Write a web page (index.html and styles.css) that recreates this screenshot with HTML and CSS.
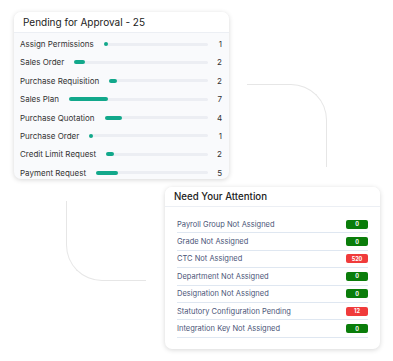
FILE: index.html
```html
<!DOCTYPE html>
<html lang="en">
<head>
<meta charset="utf-8">
<title>Dashboard</title>
<link rel="stylesheet" href="styles.css">
</head>
<body>
<div class="page">
  <div class="deco deco-tr"></div>
  <div class="deco deco-bl"></div>

  <section class="card approvals">
    <header class="card-head">Pending for Approval - 25</header>
    <div class="approval-list">
      <div class="a-row"><span class="a-label">Assign Permissions</span><div class="track"><div class="fill" style="width:4px"></div></div><span class="a-num">1</span></div>
      <div class="a-row"><span class="a-label">Sales Order</span><div class="track"><div class="fill" style="width:11px"></div></div><span class="a-num">2</span></div>
      <div class="a-row"><span class="a-label">Purchase Requisition</span><div class="track"><div class="fill" style="width:8px"></div></div><span class="a-num">2</span></div>
      <div class="a-row"><span class="a-label">Sales Plan</span><div class="track"><div class="fill" style="width:39px"></div></div><span class="a-num">7</span></div>
      <div class="a-row"><span class="a-label">Purchase Quotation</span><div class="track"><div class="fill" style="width:17px"></div></div><span class="a-num">4</span></div>
      <div class="a-row"><span class="a-label">Purchase Order</span><div class="track"><div class="fill" style="width:4px"></div></div><span class="a-num">1</span></div>
      <div class="a-row"><span class="a-label">Credit Limit Request</span><div class="track"><div class="fill" style="width:8px"></div></div><span class="a-num">2</span></div>
      <div class="a-row"><span class="a-label">Payment Request</span><div class="track"><div class="fill" style="width:22px"></div></div><span class="a-num">5</span></div>
    </div>
  </section>

  <section class="card attention">
    <header class="card-head head-bold">Need Your Attention</header>
    <div class="att-list">
      <div class="t-row"><span class="t-label">Payroll Group Not Assigned</span><span class="badge ok">0</span></div>
      <div class="t-row"><span class="t-label">Grade Not Assigned</span><span class="badge ok">0</span></div>
      <div class="t-row"><span class="t-label">CTC Not Assigned</span><span class="badge bad">520</span></div>
      <div class="t-row"><span class="t-label">Department Not Assigned</span><span class="badge ok">0</span></div>
      <div class="t-row"><span class="t-label">Designation Not Assigned</span><span class="badge ok">0</span></div>
      <div class="t-row"><span class="t-label">Statutory Configuration Pending</span><span class="badge bad">12</span></div>
      <div class="t-row"><span class="t-label">Integration Key Not Assigned</span><span class="badge ok">0</span></div>
    </div>
  </section>
</div>
</body>
</html>
```

FILE: styles.css
```css
* { box-sizing: border-box; }
html, body { margin: 0; padding: 0; background: #ffffff; }
body {
  font-family: "Inter", "DejaVu Sans", sans-serif;
  width: 393px;
  height: 361px;
  overflow: hidden;
}
.page {
  position: relative;
  width: 393px;
  height: 361px;
  padding-top: 12px;
}
.deco {
  position: absolute;
  border: 0 solid #e6e6e6;
}
.deco-tr {
  left: 247px;
  top: 84px;
  width: 80px;
  height: 83px;
  border-top-width: 1.5px;
  border-right-width: 1.5px;
  border-top-right-radius: 36px;
}
.deco-bl {
  left: 66px;
  top: 201px;
  width: 80px;
  height: 80px;
  border-left-width: 1.5px;
  border-bottom-width: 1.5px;
  border-bottom-left-radius: 36px;
}
.card {
  position: relative;
  width: 215px;
  border-radius: 7px;
  overflow: hidden;
  box-shadow: 0 1px 5px rgba(0, 0, 0, 0.16);
}
.approvals {
  margin-left: 14px;
  height: 167px;
  background: #f9fafc;
}
.attention {
  margin-left: 165px;
  margin-top: 8px;
  height: 162px;
  background: #ffffff;
}
.card-head {
  height: 21px;
  display: flex;
  align-items: center;
  padding-left: 9px;
  background: #ffffff;
  border-bottom: 1px solid #eceff4;
  font-size: 10px;
  color: #222;
}
.head-bold {
  height: 20px;
  font-weight: 500;
  font-size: 9.7px;
}
.approval-list {
  display: flex;
  flex-direction: column;
  gap: 8.4px;
  padding: 6px 6px 0 6px;
}
.a-row {
  display: flex;
  align-items: center;
  height: 10px;
  font-size: 8px;
  color: #333;
}
.a-label { white-space: nowrap; }
.track {
  flex: 1;
  height: 3px;
  margin: 0 9px 0 10px;
  background: #eceef3;
  border-radius: 2px;
  display: flex;
  align-items: center;
}
.fill {
  flex: none;
  height: 4px;
  border-radius: 2px;
  background: #12a88b;
}
.a-num {
  width: 5px;
  text-align: right;
  margin-right: 1px;
}
.att-list {
  padding: 9px 12px 0 12px;
}
.t-row {
  height: 17.4px;
  display: flex;
  align-items: center;
  justify-content: space-between;
  border-bottom: 1px solid #dfe7f1;
  font-size: 7.5px;
  color: #4b5578;
}
.badge {
  width: 22px;
  height: 9px;
  border-radius: 2px;
  color: #fff;
  font-size: 5.5px;
  font-weight: 700;
  display: flex;
  align-items: center;
  justify-content: center;
}
.ok { background: #0a7d0a; }
.bad { background: #f03b3b; }
```
